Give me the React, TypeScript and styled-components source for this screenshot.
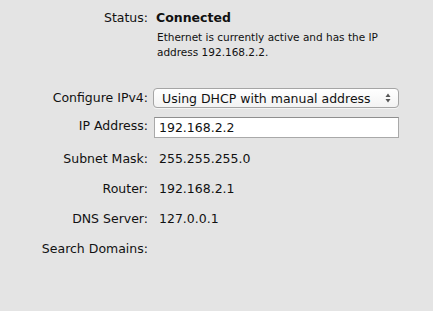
import React from "react";
import styled, { createGlobalStyle } from "styled-components";

const Global = createGlobalStyle`
  html, body { margin: 0; padding: 0; background: #e4e4e4; }
  body { font-family: "Lucida Grande", "DejaVu Sans", sans-serif; color: #111; }
`;

const Page = styled.div`
  width: 433px;
  height: 311px;
  background: #e4e4e4;
  box-sizing: border-box;
  padding-top: 10px;
  overflow: hidden;
`;

const Form = styled.div`
  display: grid;
  grid-template-columns: 148px 245px;
  column-gap: 6px;
  align-items: center;
`;

const Label = styled.div<{ $h?: number }>`
  text-align: right;
  font-size: 12.5px;
  height: ${(p) => p.$h ?? 30}px;
  line-height: ${(p) => p.$h ?? 30}px;
  white-space: nowrap;
`;

const Value = styled.div<{ $h?: number; $bold?: boolean; $indent?: number }>`
  font-size: 12.5px;
  height: ${(p) => p.$h ?? 30}px;
  line-height: ${(p) => p.$h ?? 30}px;
  font-weight: ${(p) => (p.$bold ? 700 : 400)};
  padding-left: ${(p) => p.$indent ?? 5}px;
  white-space: nowrap;
`;

const Note = styled.div`
  grid-column: 2;
  font-size: 10.5px;
  line-height: 15px;
  padding: 4px 0 0 3px;
  margin-bottom: 28px;
  width: 235px;
`;

const Select = styled.div`
  height: 20px;
  box-sizing: border-box;
  border: 1px solid #a5a5a5;
  border-radius: 4px;
  background: linear-gradient(#ffffff, #f3f3f3);
  box-shadow: 0 1px 0 rgba(255, 255, 255, 0.6);
  display: flex;
  align-items: center;
  justify-content: space-between;
  padding: 0 7px 0 8px;
  font-size: 12.5px;
  margin-left: -1px;
`;

const Field = styled.div`
  height: 21px;
  box-sizing: border-box;
  border: 1px solid #a9a9a9;
  border-top-color: #8e8e8e;
  background: #fff;
  font-size: 12.5px;
  line-height: 19px;
  padding-left: 4px;
  margin: 9px 0 6px;
`;

const Arrows = () => (
  <svg width="6" height="10" viewBox="0 0 6 10">
    <path d="M0.5 4 L3 0.5 L5.5 4 Z" fill="#555" />
    <path d="M0.5 6 L3 9.5 L5.5 6 Z" fill="#555" />
  </svg>
);

export default function App() {
  return (
    <Page>
      <Global />
      <Form>
        <Label $h={16}>Status:</Label>
        <Value $h={16} $bold $indent={2}>Connected</Value>
        <Note>Ethernet is currently active and has the IP address 192.168.2.2.</Note>

        <Label $h={20}>Configure IPv4:</Label>
        <Select>
          <span>Using DHCP with manual address</span>
          <Arrows />
        </Select>

        <Label $h={36}>IP Address:</Label>
        <Field>192.168.2.2</Field>

        <Label>Subnet Mask:</Label>
        <Value>255.255.255.0</Value>
        <Label>Router:</Label>
        <Value>192.168.2.1</Value>
        <Label>DNS Server:</Label>
        <Value>127.0.0.1</Value>
        <Label>Search Domains:</Label>
        <Value />
      </Form>
    </Page>
  );
}
